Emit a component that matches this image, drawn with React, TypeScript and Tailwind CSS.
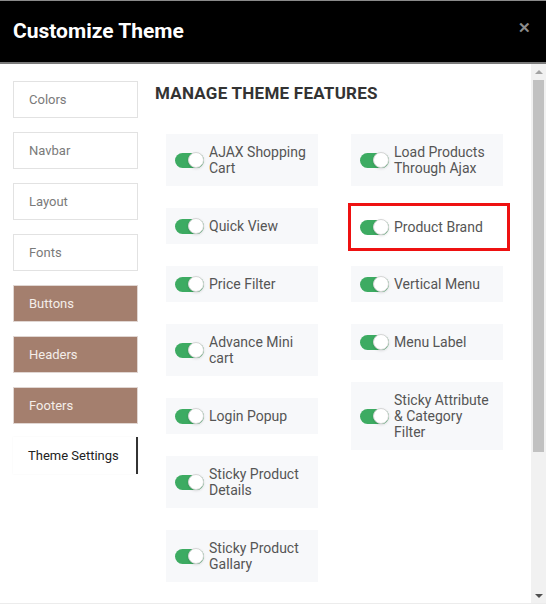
import React from 'react';

interface Feature {
  label: string;
  highlight?: boolean;
}

const leftFeatures: Feature[] = [
  { label: 'AJAX Shopping Cart' },
  { label: 'Quick View' },
  { label: 'Price Filter' },
  { label: 'Advance Mini cart' },
  { label: 'Login Popup' },
  { label: 'Sticky Product Details' },
  { label: 'Sticky Product Gallary' },
];

const rightFeatures: Feature[] = [
  { label: 'Load Products Through Ajax' },
  { label: 'Product Brand', highlight: true },
  { label: 'Vertical Menu' },
  { label: 'Menu Label' },
  { label: 'Sticky Attribute & Category Filter' },
];

const sideItems = ['Colors', 'Navbar', 'Layout', 'Fonts', 'Buttons', 'Headers', 'Footers'];

const Toggle: React.FC = () => (
  <div className="relative w-[29px] h-[15px] shrink-0 rounded-full bg-[#3dab62]">
    <div className="absolute right-0 top-[-0.5px] w-[16px] h-[16px] rounded-full bg-white border border-[#d6d6d6] shadow-sm" />
  </div>
);

const FeatureCard: React.FC<{ feature: Feature }> = ({ feature }) => (
  <div
    className={`flex items-center gap-[5px] pl-[9px] pr-[6px] text-[14px] leading-[16px] text-[#555] ${
      feature.highlight
        ? 'bg-white border-[3px] border-[#ee1111] -ml-[3px] -mt-[5px] -mb-[7px] py-[13px] pl-[9px] w-[162px]'
        : 'bg-[#f7f8fa] w-[152px] py-[10px]'
    }`}
  >
    <Toggle />
    <span>{feature.label}</span>
  </div>
);

const App: React.FC = () => {
  return (
    <div
      className="w-[546px] h-[604px] bg-white border-t border-[#8a8a8a] flex flex-col overflow-hidden"
      style={{ fontFamily: 'Roboto, "Liberation Sans", sans-serif' }}
    >
      <div className="h-[63px] shrink-0 bg-black border-b-2 border-[#7a7a7a] flex items-center justify-between pl-[13px] pr-[15px]">
        <h1 className="text-white text-[21px] font-bold">Customize Theme</h1>
        <span className="text-[#8c8c8c] text-[15px] font-bold mt-[-7px]">✕</span>
      </div>

      <div className="flex flex-1 min-h-0 border-b border-[#ececec]">
        <div className="flex flex-1">
          {/* sidebar */}
          <div className="flex flex-col gap-[14px] pl-[13px] pt-[17px] w-[138px] shrink-0">
            {sideItems.map((item, i) => (
              <div
                key={item}
                className={`h-[37px] flex items-center pl-[15px] text-[13px] border ${
                  i >= 4
                    ? 'bg-[#a47f6e] border-[#e0d6d2] text-[#f4eeea]'
                    : 'bg-white border-[#e2e2e2] text-[#7a7a7a]'
                }`}
              >
                {item}
              </div>
            ))}
            <div className="h-[37px] -mt-[1px] flex items-center pl-[15px] text-[13px] text-[#222] bg-white border-r-2 border-[#333] shadow-[0_0_2px_rgba(0,0,0,0.04)]">
              Theme Settings
            </div>
          </div>

          {/* main */}
          <div className="pl-[17px] pt-[19px] flex-1">
            <h2 className="text-[17px] leading-[20px] font-bold text-[#333] tracking-[0.25px]">MANAGE THEME FEATURES</h2>
            <div className="flex gap-[33px] pl-[11px] mt-[31px]">
              <div className="flex flex-col gap-[22px]">
                {leftFeatures.map((f) => (
                  <FeatureCard key={f.label} feature={f} />
                ))}
              </div>
              <div className="flex flex-col gap-[22px]">
                {rightFeatures.map((f) => (
                  <FeatureCard key={f.label} feature={f} />
                ))}
              </div>
            </div>
          </div>
        </div>

        {/* scrollbar */}
        <div className="w-[15px] shrink-0 bg-[#f1f1f1] flex flex-col items-center">
          <div className="h-[15px] flex items-center justify-center">
            <div className="w-0 h-0 border-l-[4px] border-r-[4px] border-b-[4px] border-l-transparent border-r-transparent border-b-[#a3a3a3]" />
          </div>
          <div className="w-[11px] h-[372px] bg-[#c1c1c1] mt-[1px]" />
          <div className="flex-1" />
          <div className="h-[15px] flex items-center justify-center">
            <div className="w-0 h-0 border-l-[4px] border-r-[4px] border-t-[4px] border-l-transparent border-r-transparent border-t-[#505050]" />
          </div>
        </div>
      </div>
    </div>
  );
};

export default App;
